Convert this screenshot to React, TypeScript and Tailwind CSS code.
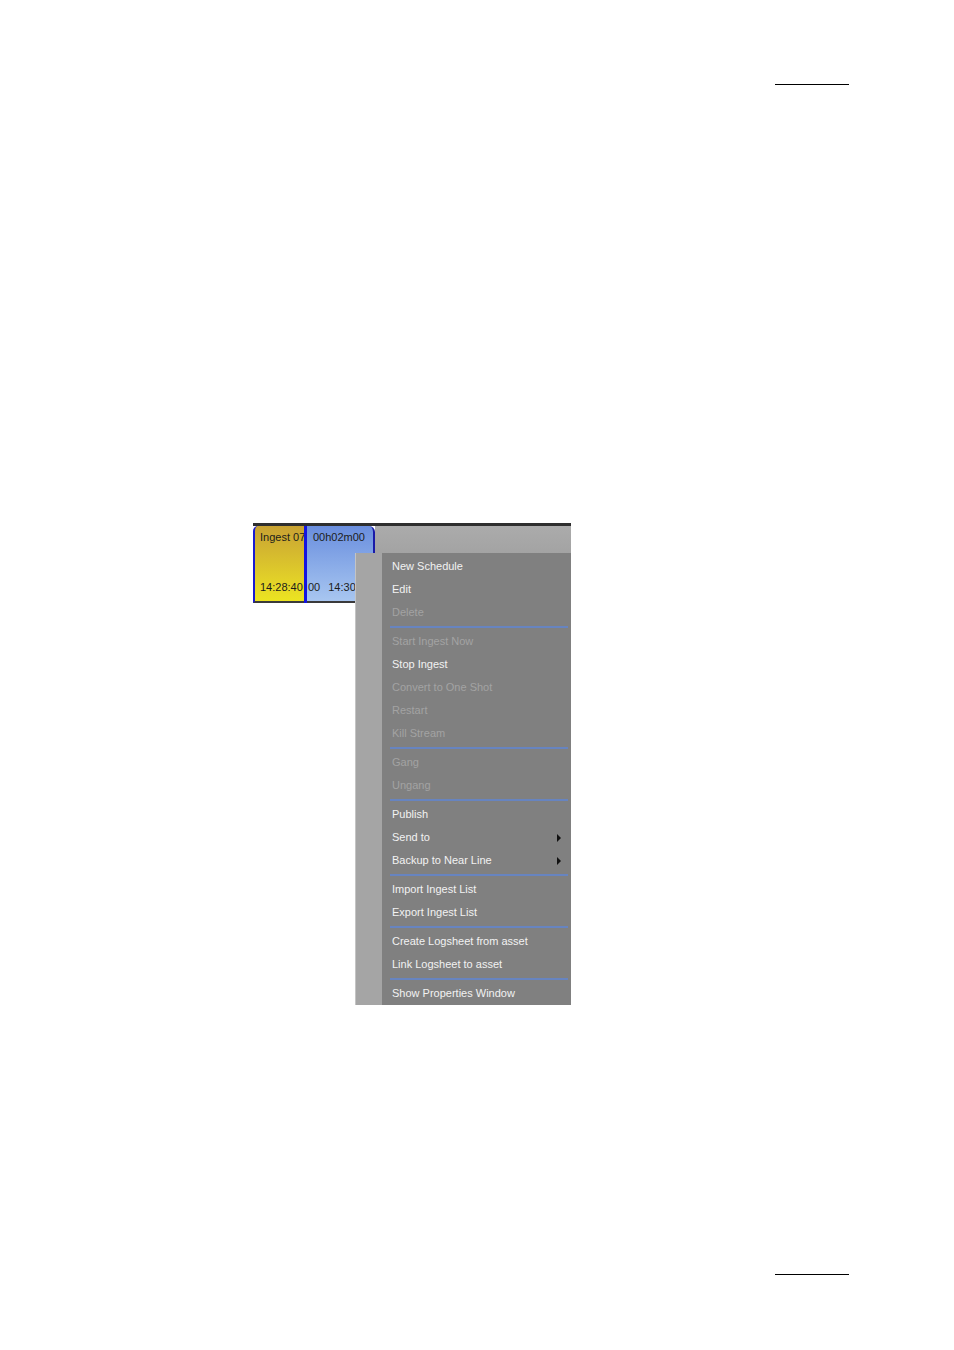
import React from "react";

type Item = { label: string; disabled?: boolean; sub?: boolean } | "sep";

const items: Item[] = [
  { label: "New Schedule" },
  { label: "Edit" },
  { label: "Delete", disabled: true },
  "sep",
  { label: "Start Ingest Now", disabled: true },
  { label: "Stop Ingest" },
  { label: "Convert to One Shot", disabled: true },
  { label: "Restart", disabled: true },
  { label: "Kill Stream", disabled: true },
  "sep",
  { label: "Gang", disabled: true },
  { label: "Ungang", disabled: true },
  "sep",
  { label: "Publish" },
  { label: "Send to", sub: true },
  { label: "Backup to Near Line", sub: true },
  "sep",
  { label: "Import Ingest List" },
  { label: "Export Ingest List" },
  "sep",
  { label: "Create Logsheet from asset" },
  { label: "Link Logsheet to asset" },
  "sep",
  { label: "Show Properties Window" },
];

export default function App() {
  return (
    <div
      className="relative w-[954px] h-[1350px] bg-white overflow-hidden"
      style={{ fontFamily: '"Liberation Sans", Arial, sans-serif' }}
    >
      <div className="pt-[84px]">
        <div className="ml-[775px] w-[74px] h-px bg-black" />
      </div>

      {/* timeline strip */}
      <div className="ml-[253px] mt-[438px] w-[318px] h-[80px] border-t-[3px] border-[#2e2e2e] flex">
        <div className="w-[51px] h-full flex flex-col border-b-2 border-[#3a3a3a] rounded-tl-[5px] border-l-2 border-l-[#1a1ad0] bg-gradient-to-b from-[#c8a232] to-[#ece420] text-[11px] text-[#1c1c1c] leading-none overflow-hidden whitespace-nowrap">
          <div className="pl-[5px] pt-[6px]">Ingest 07</div>
          <div className="flex-1" />
          <div className="pl-[5px] pb-[8px]">14:28:40</div>
        </div>
        <div className="w-[3px] h-full bg-[#1414e0]" />
        <div className="w-[68px] h-full flex flex-col border-b-2 border-b-[#3a3a3a] border-r-2 border-r-[#1a1aa8] rounded-tr-[6px] bg-gradient-to-b from-[#6a8ede] to-[#a8c6f0] text-[11px] text-[#1c1c1c] leading-none overflow-hidden whitespace-nowrap">
          <div className="pl-[6px] pt-[6px]">00h02m00</div>
          <div className="flex-1" />
          <div className="pl-[1px] pb-[8px] flex">
            <span>00</span>
            <span className="ml-[8px]">14:30:00</span>
          </div>
        </div>
        <div className="flex-1 h-full bg-gradient-to-b from-[#ababab] to-[#959595]" />
      </div>

      <div className="mt-[671px]">
        <div className="ml-[775px] w-[74px] h-px bg-black" />
      </div>

      {/* context menu */}
      <div className="absolute left-[355px] top-[553px] w-[216px] h-[452px] bg-[#808080] border-l border-[#c4c4c4] flex">
        <div className="w-[26px] h-full bg-[#a5a5a5]" />
        <div className="flex-1 pt-[2px]">
          {items.map((it, i) =>
            it === "sep" ? (
              <div key={i} className="h-[6px] pt-[2px] pl-[8px] pr-[3px]">
                <div className="h-[2px] w-full bg-[#6784c0]" />
              </div>
            ) : (
              <div
                key={i}
                className={`h-[23px] flex items-center pl-[10px] pr-[10px] text-[11px] ${
                  it.disabled ? "text-[#a3a3a3]" : "text-[#f2f2f2]"
                }`}
              >
                <span className="flex-1">{it.label}</span>
                {it.sub && (
                  <span className="w-0 h-0 border-y-[4px] border-y-transparent border-l-[4px] border-l-[#111]" />
                )}
              </div>
            )
          )}
        </div>
      </div>
    </div>
  );
}
